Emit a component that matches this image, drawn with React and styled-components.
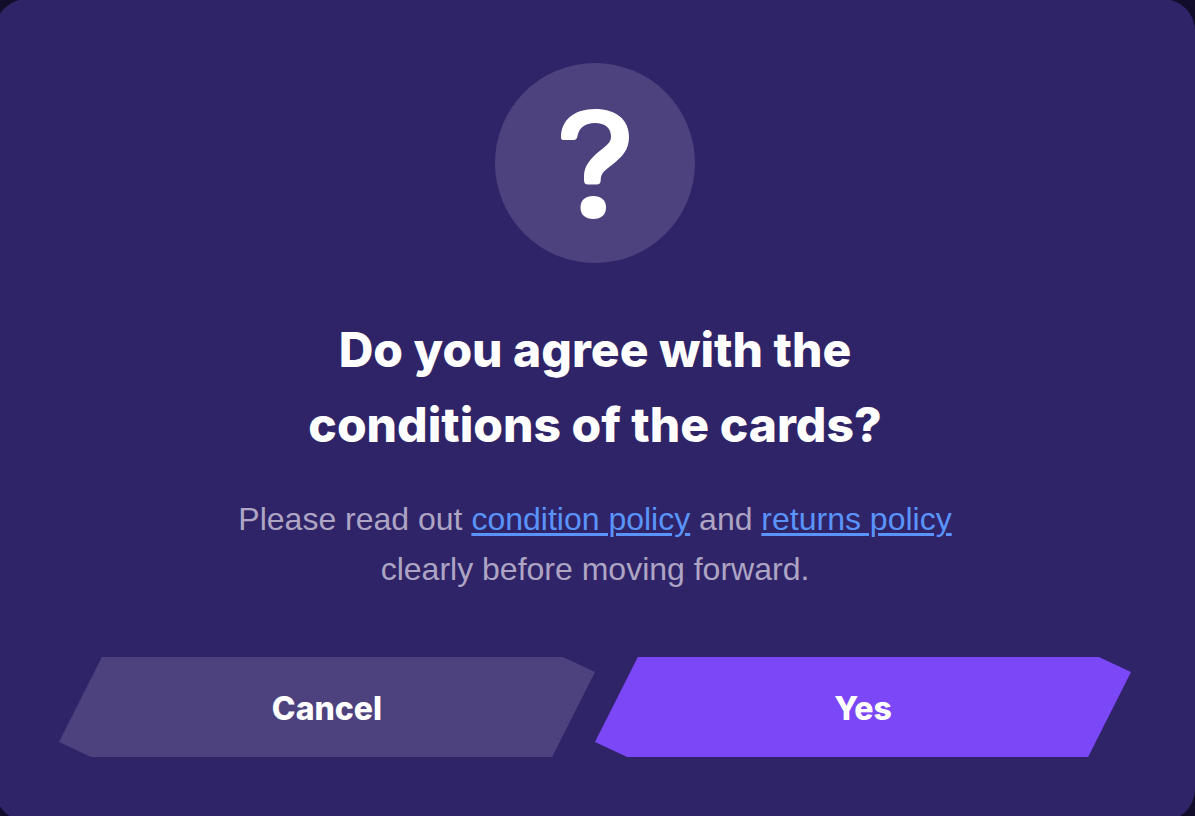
import React from "react";
import styled, { createGlobalStyle, ThemeProvider } from "styled-components";

const theme = {
  backdrop: "#120d2b",
  surface: "#2f2468",
  muted: "#4d417e",
  accent: "#7c47f7",
  link: "#5a94fb",
  text: "#aea5c4",
  heading: "#ffffff",
};

const GlobalStyle = createGlobalStyle`
  *, *::before, *::after { box-sizing: border-box; }
  body {
    margin: 0;
    overflow: hidden;
    background: ${theme.backdrop};
    font-family: Inter, "Liberation Sans", sans-serif;
  }
`;

const Dialog = styled.main`
  display: flex;
  flex-direction: column;
  align-items: center;
  margin: -1px 0 -5px -5px;
  padding: 64px;
  border-radius: 32px;
  background: ${({ theme }) => theme.surface};
  text-align: center;
`;

const IconCircle = styled.div`
  display: flex;
  align-items: center;
  justify-content: center;
  width: 200px;
  height: 200px;
  border-radius: 50%;
  background: ${({ theme }) => theme.muted};
`;

const Title = styled.h1`
  max-width: 640px;
  margin: 49px 0 0;
  color: ${({ theme }) => theme.heading};
  font-size: 48px;
  font-weight: 800;
  line-height: 75px;
`;

const Description = styled.p`
  max-width: 800px;
  margin: 32px 0 0;
  color: ${({ theme }) => theme.text};
  font-family: "Liberation Sans", Arial, sans-serif;
  font-size: 32px;
  font-weight: 400;
  line-height: 50px;
`;

const PolicyLink = styled.a`
  color: ${({ theme }) => theme.link};
  text-decoration: underline;
  text-decoration-thickness: 3px;
  text-underline-offset: 3px;
`;

const Actions = styled.div`
  display: grid;
  grid-template-columns: 1fr 1fr;
  width: 100%;
  margin-top: 63px;
`;

const ActionButton = styled.button`
  height: 100px;
  padding: 2px 0 0;
  border: 0;
  background: ${({ theme, $primary }) => ($primary ? theme.accent : theme.muted)};
  color: ${({ theme }) => theme.heading};
  font: inherit;
  font-size: 32px;
  font-weight: 800;
  clip-path: polygon(8% 0, 94% 0, 100% 15%, 92% 100%, 6% 100%, 0 85%);
  cursor: pointer;
`;

function QuestionIcon() {
  return (
    <svg width="70" height="112" viewBox="560 107 70 112" fill="#fff" aria-hidden="true">
      <path d="M561 137.500C561 120 574 109 595 109C616 109 629 119.500 629 137C629 150 622 157 612.500 164.500C604 171 601 173 600.700 180C600.700 183 599.500 184.500 596.500 184.500H588C585.200 184.500 584 183 584 180V176C584 166 591 158 599 151.500C607 145 611 142.500 611 136.500C611 128 605 123 595 123C585 123 579 128 577.500 136C577 138.500 576 140 573.500 140H563.500C561.800 140 561 139.200 561 137.500Z" />
      <path d="M593.200 196C601 196 606 200 606 207.500C606 215 601 219 593.200 219C585.500 219 580.500 215 580.500 207.500C580.500 200 585.500 196 593.200 196Z" />
    </svg>
  );
}

export default function App() {
  return (
    <ThemeProvider theme={theme}>
      <GlobalStyle />
      <Dialog role="dialog" aria-labelledby="dialog-title" aria-describedby="dialog-text">
        <IconCircle>
          <QuestionIcon />
        </IconCircle>
        <Title id="dialog-title">
          Do you agree with the <br />
          conditions of the cards?
        </Title>
        <Description id="dialog-text">
          Please read out <PolicyLink href="#condition">condition policy</PolicyLink> and{" "}
          <PolicyLink href="#returns">returns policy</PolicyLink> <br />
          clearly before moving forward.
        </Description>
        <Actions>
          <ActionButton type="button">Cancel</ActionButton>
          <ActionButton type="button" $primary>Yes</ActionButton>
        </Actions>
      </Dialog>
    </ThemeProvider>
  );
}
